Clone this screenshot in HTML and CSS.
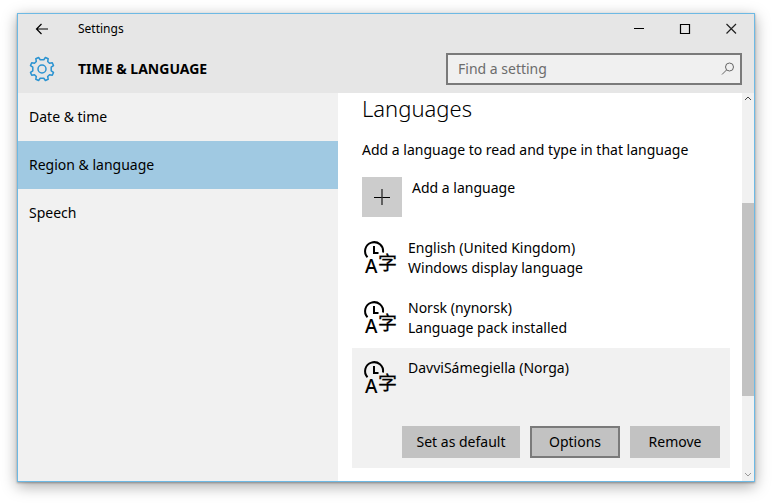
FILE: index.html
```html
<!DOCTYPE html>
<html lang="en">
<head>
<meta charset="utf-8">
<title>Settings</title>
<link rel="stylesheet" href="styles.css">
</head>
<body>
<div class="window">
  <header class="top">
    <div class="titlebar">
      <button class="back" aria-label="Back"><svg width="14" height="12" viewBox="0 0 14 12"><path d="M13 6H1.500M6.500 1L1.500 6l5 5" fill="none" stroke="#000" stroke-width="1.200"/></svg></button>
      <span class="title">Settings</span>
      <div class="controls">
        <button aria-label="Minimize"><svg width="12" height="12" viewBox="0 0 12 12"><path d="M1 5.500h10" stroke="#000"/></svg></button>
        <button aria-label="Maximize"><svg width="12" height="12" viewBox="0 0 12 12"><path d="M1.500 1.500h9v9h-9z" fill="none" stroke="#000" stroke-width="1.200"/></svg></button>
        <button aria-label="Close"><svg width="12" height="12" viewBox="0 0 12 12"><path d="M1.500 1l9.500 9.500M11 1L1.500 10.500" stroke="#222" stroke-width="1.200"/></svg></button>
      </div>
    </div>
    <div class="heading">
      <svg class="gear" width="26" height="26" viewBox="-13 -13 26 26" fill="none" stroke="#2b93d1" stroke-width="1.500"><circle r="4"/><path stroke-linejoin="round" d="M-1.800 -9.200L1.800 -9.200L3.400 -11.500L6.200 -10.300L5.700 -7.500L7.500 -5.700L10.300 -6.200L11.500 -3.400L9.200 -1.800L9.200 1.800L11.500 3.400L10.300 6.200L7.500 5.700L5.700 7.500L6.200 10.300L3.400 11.500L1.800 9.200L-1.800 9.200L-3.400 11.500L-6.200 10.300L-5.700 7.500L-7.500 5.700L-10.300 6.200L-11.500 3.400L-9.200 1.800L-9.200 -1.800L-11.500 -3.400L-10.300 -6.200L-7.500 -5.700L-5.700 -7.500L-6.200 -10.300L-3.400 -11.500Z"/></svg>
      <h1>TIME &amp; LANGUAGE</h1>
      <label class="search">
        <input type="text" placeholder="Find a setting" aria-label="Find a setting">
        <svg width="14" height="14" viewBox="0 0 14 14" fill="none" stroke="#666"><circle cx="8.500" cy="5" r="4"/><path d="M5.500 8L1 12.500"/></svg>
      </label>
    </div>
  </header>
  <div class="body">
    <nav class="sidebar">
      <a href="#date">Date &amp; time</a>
      <a href="#region" class="active" aria-current="page">Region &amp; language</a>
      <a href="#speech">Speech</a>
    </nav>
    <main>
      <h2>Languages</h2>
      <p class="intro">Add a language to read and type in that language</p>
      <button class="add">
        <span class="tile"><svg width="16" height="16" viewBox="0 0 16 16"><path d="M0 8.500h16" stroke="#000"/><path d="M8 0v16" stroke="#333" stroke-width="1.400"/></svg></span>
        <span>Add a language</span>
      </button>
      <ul class="languages">
        <li>
          <div class="language">
            <svg class="icon" viewBox="0 0 36 40" aria-hidden="true"><path d="M5.500 19.300A9 9 0 1 1 21 14.500M12 8V15H16.500"/><text class="glyph-latin" x="3" y="35">A</text><text class="glyph-cjk" x="16" y="32">字</text></svg>
            <div><div>English (United Kingdom)</div><div>Windows display language</div></div>
          </div>
        </li>
        <li>
          <div class="language">
            <svg class="icon" viewBox="0 0 36 40" aria-hidden="true"><path d="M5.500 19.300A9 9 0 1 1 21 14.500M12 8V15H16.500"/><text class="glyph-latin" x="3" y="35">A</text><text class="glyph-cjk" x="16" y="32">字</text></svg>
            <div><div>Norsk (nynorsk)</div><div>Language pack installed</div></div>
          </div>
        </li>
        <li class="selected">
          <div class="language">
            <svg class="icon" viewBox="0 0 36 40" aria-hidden="true"><path d="M5.500 19.300A9 9 0 1 1 21 14.500M12 8V15H16.500"/><text class="glyph-latin" x="3" y="35">A</text><text class="glyph-cjk" x="16" y="32">字</text></svg>
            <div><div>DavviSámegiella (Norga)</div></div>
          </div>
          <div class="actions">
            <button class="wide">Set as default</button>
            <button class="focused">Options</button>
            <button>Remove</button>
          </div>
        </li>
      </ul>
    </main>
    <div class="scrollbar" aria-hidden="true">
      <svg width="8" height="12" viewBox="0 0 8 12"><path d="M1 7l3-3 3 3" fill="none" stroke="#444"/></svg>
      <div class="track"><div class="thumb"></div></div>
      <svg width="8" height="12" viewBox="0 0 8 12"><path d="M1 4l3 3 3-3" fill="none" stroke="#999"/></svg>
    </div>
  </div>
</div>
</body>
</html>
```
FILE: styles.css
```css
* {
  box-sizing: border-box;
}

body {
  display: flex;
  min-height: 100vh;
  margin: 0;
  padding: 13px 17px 21px;
  background: #fff;
  color: #000;
  font: 14px/20px "Noto Sans", "Noto Sans CJK SC", sans-serif;
}

button,
input {
  font: inherit;
  color: inherit;
}

button {
  border: 0;
  padding: 0;
  background: none;
}

svg {
  display: block;
  flex: none;
}

.window {
  display: flex;
  flex-direction: column;
  flex: 1;
  border: 1px solid #6db9e4;
  box-shadow: 0 4px 14px rgba(0, 0, 0, 0.35), 0 1px 2px rgba(0, 0, 0, 0.3);
}

.top {
  background: #e6e6e6;
}

.titlebar {
  display: flex;
  align-items: center;
  height: 30px;
}

.back {
  display: grid;
  place-items: center;
  width: 48px;
  height: 30px;
}

.title {
  margin-left: 12px;
  font-size: 12px;
}

.controls {
  display: flex;
  margin-left: auto;
}

.controls button {
  display: grid;
  place-items: center;
  width: 46px;
  height: 30px;
}

.heading {
  display: flex;
  align-items: center;
  height: 49px;
  padding: 0 12px 0 11px;
}

h1 {
  margin: 0 0 0 23px;
  font-size: 14px;
  font-weight: 700;
}

.search {
  display: flex;
  align-items: center;
  width: 296px;
  height: 32px;
  margin-left: auto;
  padding: 0 5px 0 10px;
  border: 2px solid #7a7a7a;
  background: #f0f0f0;
}

.search input {
  flex: 1;
  min-width: 0;
  padding: 0;
  border: 0;
  outline: 0;
  background: none;
}

.search input::placeholder {
  color: #6c6c6c;
  opacity: 1;
}

.body {
  display: flex;
  flex: 1;
}

.sidebar {
  width: 320px;
  background: #f1f1f1;
}

.sidebar a {
  display: flex;
  align-items: center;
  height: 48px;
  padding-left: 11px;
  color: #000;
  text-decoration: none;
}

.sidebar .active {
  background: #a0c9e2;
}

main {
  flex: 1;
  padding: 0 12px 12px 14px;
  background: #fff;
}

h2 {
  margin: 0 10px;
  font-size: 22px;
  line-height: 30px;
  font-weight: 300;
}

.intro {
  margin: 17px 10px;
}

.add {
  display: flex;
  align-items: flex-start;
  gap: 10px;
  margin: 0 10px 11px;
  line-height: 22px;
}

.tile {
  display: grid;
  place-items: center;
  width: 40px;
  height: 40px;
  background: #ccc;
}

.languages {
  margin: 0;
  padding: 0;
  list-style: none;
}

.languages li {
  padding: 10px;
}

.languages .selected {
  background: #f1f1f1;
}

.language {
  display: flex;
  gap: 10px;
}

.icon {
  width: 36px;
  height: 40px;
}

.icon path {
  fill: none;
  stroke: #000;
  stroke-width: 2;
}

.glyph-latin {
  font: 500 19px "Noto Sans", sans-serif;
}

.glyph-cjk {
  font: 400 19px "Noto Sans CJK SC", sans-serif;
  stroke: #000;
  stroke-width: 0.3px;
}

.actions {
  display: flex;
  justify-content: flex-end;
  gap: 10px;
  margin-top: 28px;
}

.actions button {
  width: 90px;
  height: 32px;
  background: #c2c2c2;
}

.actions .wide {
  width: 118px;
}

.actions .focused {
  border: 2px solid #7a7a7a;
}

.scrollbar {
  display: flex;
  flex-direction: column;
  align-items: center;
  width: 12px;
  background: #f1f1f1;
}

.track {
  display: grid;
  grid-template-rows: 98fr 193fr 73fr;
  flex: 1;
  width: 100%;
}

.thumb {
  grid-row: 2;
  background: #c2c2c2;
}
```
